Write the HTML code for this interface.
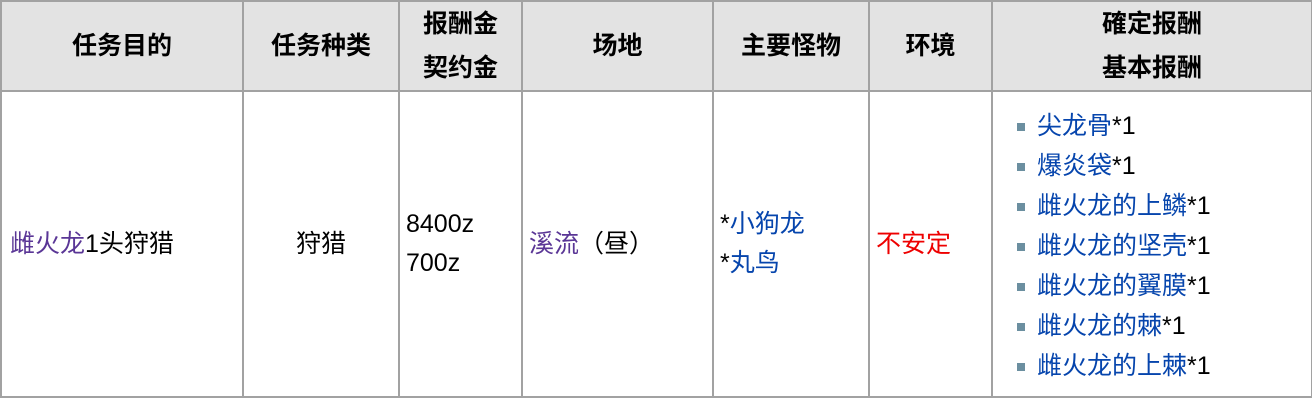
<!DOCTYPE html>
<html><head><meta charset="utf-8"><style>
html,body{margin:0;padding:0;background:#fff;}
table{position:absolute;left:0;top:0;border-collapse:collapse;width:1311px;height:398px;font-family:"Liberation Sans","Noto Sans CJK SC",sans-serif;font-size:25px;color:#000;table-layout:fixed;}
td,th{border:2px solid #a2a2a2;padding:0 6px;white-space:nowrap;}
th{background:#e3e3e3;font-weight:bold;height:88px;text-align:center;line-height:44px;}
td{line-height:39px;}
.c{text-align:center}
.v{color:#5a3696}.b{color:#0645ad}.r{color:#e00}
ul{margin:0;padding:0 0 0 38px;list-style:none;}
li{position:relative;line-height:40px;}
li:before{content:"";position:absolute;left:-20px;top:17px;width:8px;height:8px;background:#6b8fa0;}
</style></head><body>
<table>
<colgroup><col style="width:242px"><col style="width:156px"><col style="width:123px"><col style="width:191px"><col style="width:156px"><col style="width:123px"><col style="width:320px"></colgroup>
<tr><th>任务目的</th><th>任务种类</th><th>报酬金<br>契约金</th><th>场地</th><th>主要怪物</th><th>环境</th><th>確定报酬<br>基本报酬</th></tr>
<tr><td style="padding-left:8px"><span class="v">雌火龙</span>1头狩猎</td><td class="c">狩猎</td><td>8400z<br>700z</td><td><span class="v">溪流</span>（昼）</td><td>*<span class="b">小狗龙</span><br>*<span class="b">丸鸟</span></td><td><span class="r">不安定</span></td>
<td style="padding-top:4px"><ul><li><span class="b">尖龙骨</span>*1</li><li><span class="b">爆炎袋</span>*1</li><li><span class="b">雌火龙的上鳞</span>*1</li><li><span class="b">雌火龙的坚壳</span>*1</li><li><span class="b">雌火龙的翼膜</span>*1</li><li><span class="b">雌火龙的棘</span>*1</li><li><span class="b">雌火龙的上棘</span>*1</li></ul></td></tr>
</table>
</body></html>
